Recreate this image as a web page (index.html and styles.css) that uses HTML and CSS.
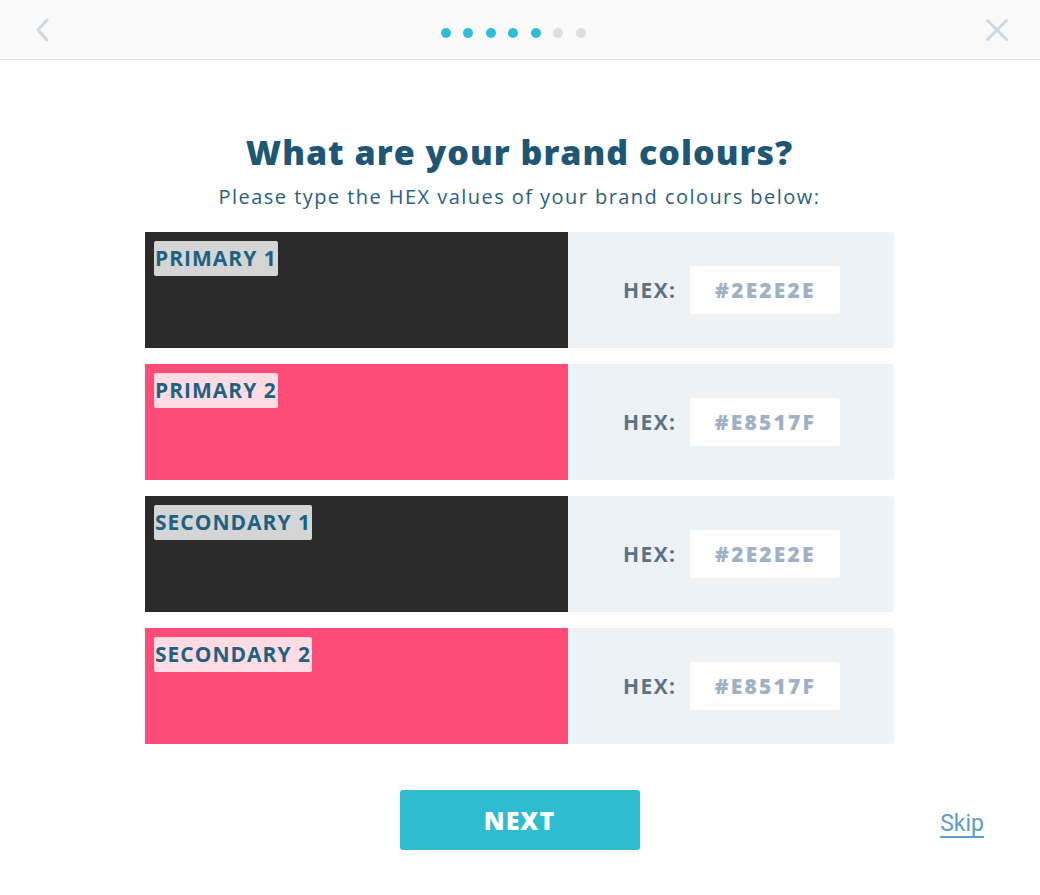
FILE: index.html
```html
<!DOCTYPE html>
<html>
<head>
<meta charset="utf-8">
<link rel="stylesheet" href="styles.css">
</head>
<body>
<header class="topbar">
  <svg class="back" width="14" height="24" viewBox="0 0 14 24"><path d="M12 2 L3 12 L12 22" fill="none" stroke="#cbd8e6" stroke-width="3" stroke-linecap="round" stroke-linejoin="round"/></svg>
  <div class="dots">
    <span class="dot on"></span><span class="dot on"></span><span class="dot on"></span><span class="dot on"></span><span class="dot on"></span><span class="dot"></span><span class="dot"></span>
  </div>
  <svg class="close" width="24" height="24" viewBox="0 0 24 24"><path d="M2.5 2.5 L21.5 21.5 M21.5 2.5 L2.5 21.5" fill="none" stroke="#cbd8e6" stroke-width="3" stroke-linecap="round"/></svg>
</header>
<main class="content">
  <h1 class="title">What are your brand colours?</h1>
  <p class="subtitle">Please type the HEX values of your brand colours below:</p>
  <div class="rows">
    <div class="row">
      <div class="swatch dark"><span class="tag">PRIMARY 1</span></div>
      <div class="panel"><span class="hexlabel">HEX:</span><span class="hexinput">#2E2E2E</span></div>
    </div>
    <div class="row">
      <div class="swatch pink"><span class="tag">PRIMARY 2</span></div>
      <div class="panel"><span class="hexlabel">HEX:</span><span class="hexinput">#E8517F</span></div>
    </div>
    <div class="row">
      <div class="swatch dark"><span class="tag">SECONDARY 1</span></div>
      <div class="panel"><span class="hexlabel">HEX:</span><span class="hexinput">#2E2E2E</span></div>
    </div>
    <div class="row">
      <div class="swatch pink"><span class="tag">SECONDARY 2</span></div>
      <div class="panel"><span class="hexlabel">HEX:</span><span class="hexinput">#E8517F</span></div>
    </div>
  </div>
  <div class="actions">
    <button class="next">NEXT</button>
    <a class="skip" href="#">Skip</a>
  </div>
</main>
</body>
</html>
```
FILE: styles.css
```css
html, body {
  margin: 0;
  padding: 0;
  background: #ffffff;
}
body {
  font-family: "Open Sans", "Liberation Sans", sans-serif;
  width: 1040px;
  height: 895px;
  overflow: hidden;
}
.topbar {
  height: 59px;
  background: #fafafa;
  border-bottom: 1px solid #e2e2e2;
  display: flex;
  align-items: center;
  justify-content: space-between;
  padding: 0 31px 0 35px;
  box-sizing: content-box;
}
.back { display: block; margin-top: 1px; }
.close { display: block; margin-top: 1px; }
.dots {
  display: flex;
  gap: 12.5px;
  margin-left: -8px;
  margin-top: 6px;
}
.dot {
  width: 10px;
  height: 10px;
  border-radius: 50%;
  background: #dedede;
}
.dot.on { background: #2fbdd1; }
.content {
  width: 749px;
  margin: 0 0 0 145px;
  padding-top: 69px;
}
.title {
  margin: 0;
  text-align: center;
  font-family: "Open Sans", sans-serif;
  font-weight: 800;
  font-size: 34px;
  letter-spacing: 1px;
  line-height: 46px;
  color: #1e5774;
}
.subtitle {
  margin: 8px 0 0;
  text-align: center;
  font-family: "Open Sans", sans-serif;
  font-size: 20px;
  letter-spacing: 1.45px;
  line-height: 28px;
  color: #2b5f79;
}
.rows {
  margin-top: 21px;
  display: flex;
  flex-direction: column;
  gap: 16px;
}
.row {
  display: flex;
  height: 116px;
}
.swatch {
  width: 423px;
  padding: 9px;
  box-sizing: border-box;
  display: flex;
  align-items: flex-start;
}
.swatch.dark { background: #2b2b2b; }
.swatch.pink { background: #fd4c78; }
.tag {
  font-family: "Open Sans", sans-serif;
  font-weight: 700;
  font-size: 21px;
  line-height: 35px;
  padding: 0 1px;
  color: #1d6280;
  border-radius: 2px;
  letter-spacing: 1px;
}
.dark .tag { background: #d5d5d5; }
.pink .tag { background: #ffdce4; }
.panel {
  flex: 1;
  background: #edf2f7;
  border-radius: 0 4px 4px 0;
  display: flex;
  align-items: center;
  padding-left: 55px;
  gap: 14px;
}
.hexlabel {
  font-family: "Open Sans", sans-serif;
  font-weight: 700;
  font-size: 21px;
  letter-spacing: 1.4px;
  color: #5d7283;
}
.hexinput {
  width: 150px;
  height: 48px;
  background: #ffffff;
  border-radius: 3px;
  display: flex;
  align-items: center;
  justify-content: center;
  font-family: "Open Sans", sans-serif;
  font-weight: 800;
  font-size: 21px;
  letter-spacing: 2.2px;
  color: #9fb2c3;
}
.actions {
  position: relative;
  margin-top: 46px;
  display: flex;
  justify-content: center;
}
.next {
  width: 240px;
  height: 60px;
  border: none;
  border-radius: 3px;
  background: #2ebdd0;
  color: #ffffff;
  font-family: "Open Sans", sans-serif;
  font-weight: 800;
  font-size: 25px;
  letter-spacing: 1px;
}
.skip {
  position: absolute;
  right: -90px;
  top: 20px;
  font-family: Roboto, sans-serif;
  font-size: 23px;
  color: #5c9dc6;
  text-decoration: underline;
  text-underline-offset: 5px;
}
```
